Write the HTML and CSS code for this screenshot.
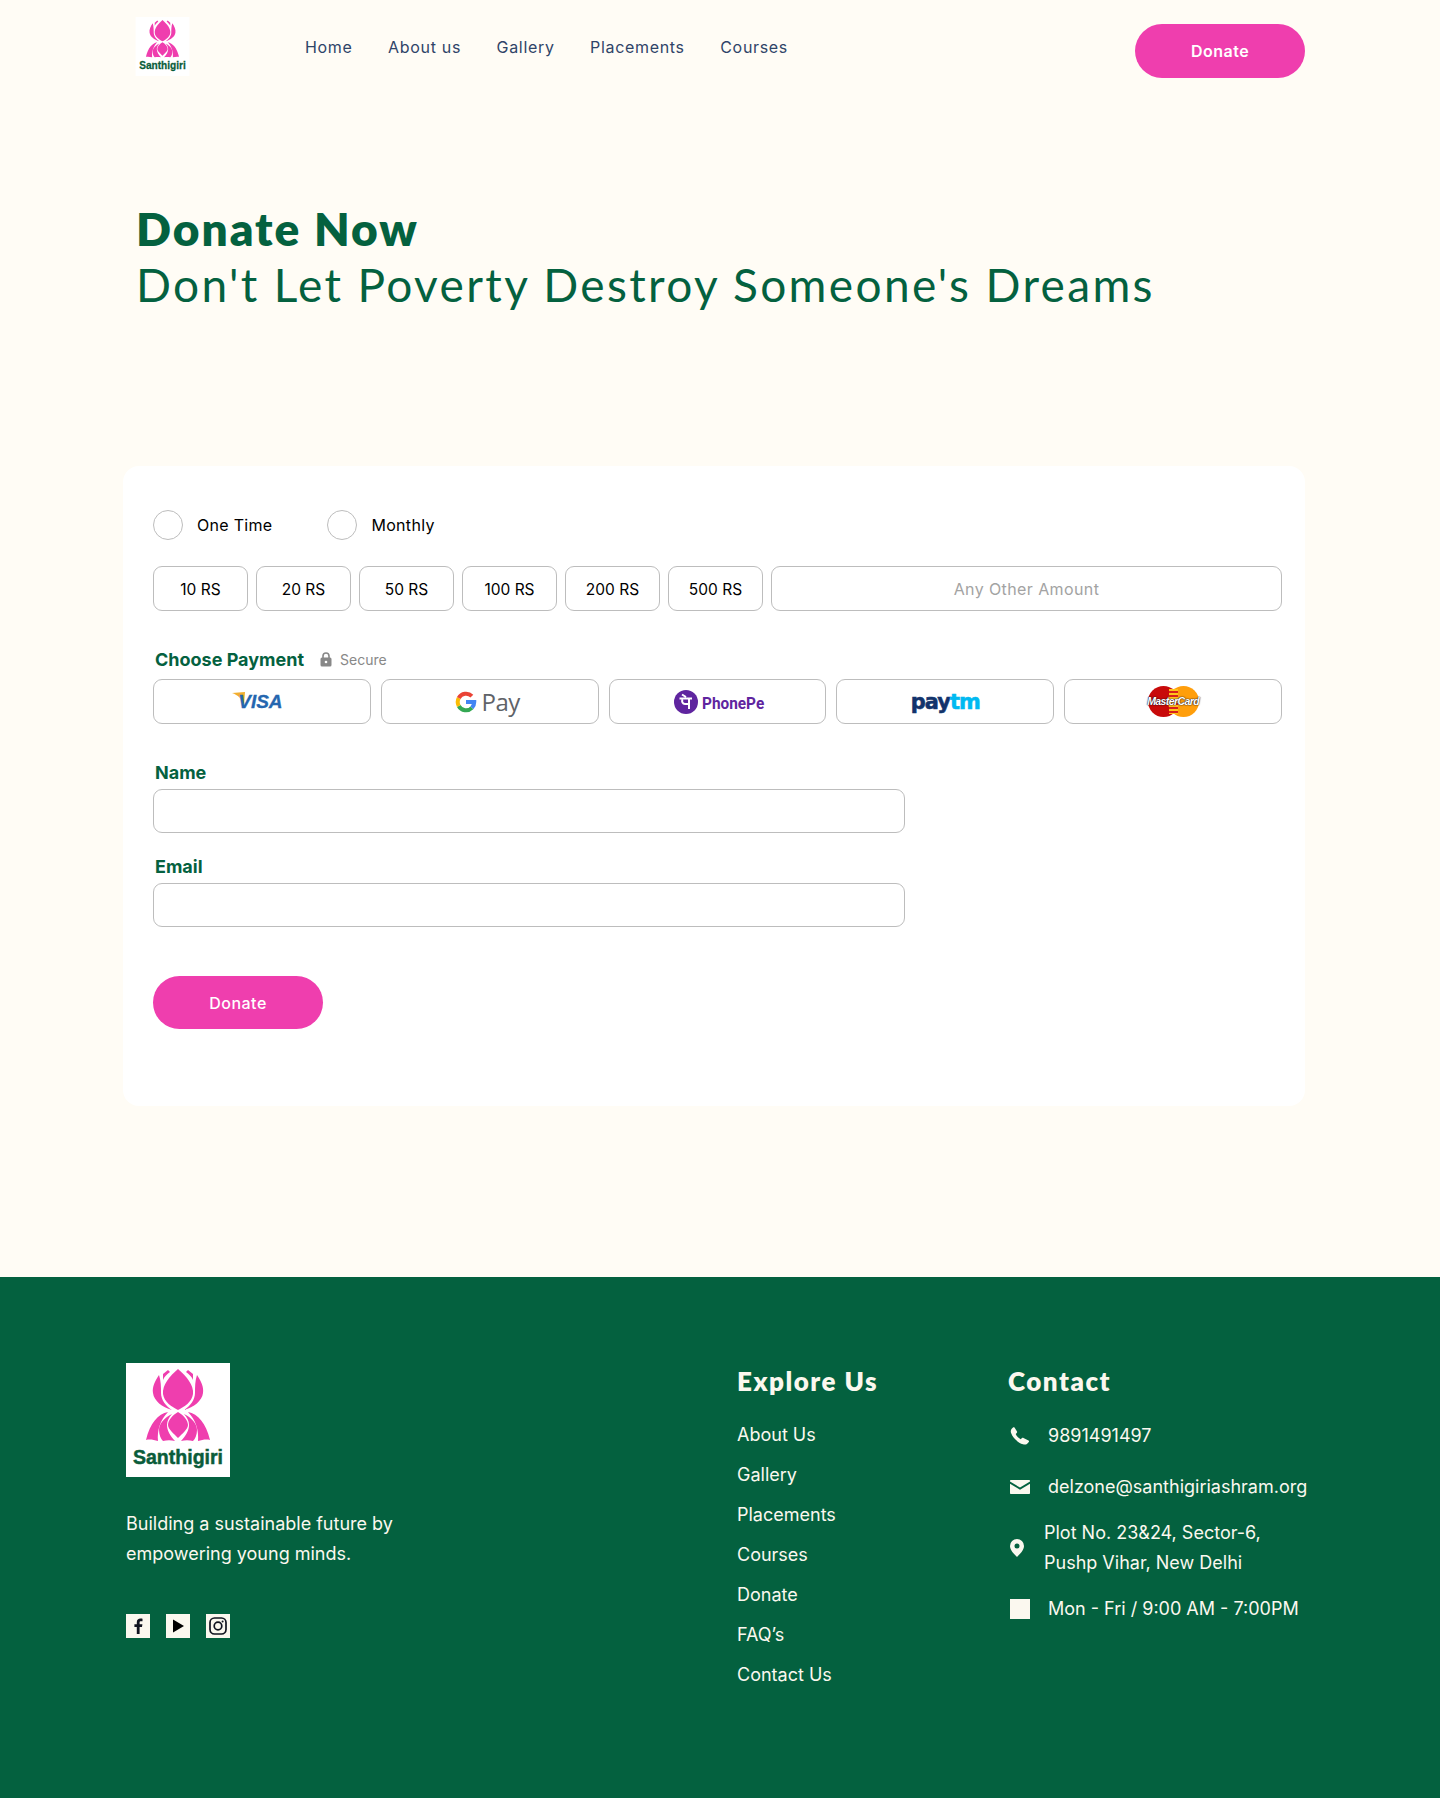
FILE: index.html
```html
<!DOCTYPE html>
<html lang="en">
<head>
<meta charset="utf-8">
<title>Donate Now - Santhigiri</title>
<link rel="stylesheet" href="styles.css">
</head>
<body>
<header class="site-header">
  <svg class="logo logo-small" viewBox="0 0 104 114" aria-label="Santhigiri">
    <rect width="104" height="114" fill="#fff"/>
    <g fill="#ef3eae">
      <path d="M52 6C60 13 68 22 67 31C66 39 58 44 52 47C46 44 38 39 37 31C36 22 44 13 52 6Z"/>
      <path d="M52 49C57 52 62 57 62 62C62 66 56 71 52 75C48 71 42 66 42 62C42 57 47 52 52 49Z"/>
      <g>
        <path d="M33 12C29 18 26 24 27 30C28 38 36 44 46 47C40 43 35 37 35 30C35 24 35 18 33 12Z"/>
        <path d="M42 7L37 11L37 17C38 14 41 11 44 9Z"/>
        <path d="M42 49C32 51 24 60 20 77C24 76 28 77 32 78C31 68 34 57 42 49Z"/>
        <path d="M46 51C38 55 33 61 33 67C33 72 35 76 37 78C41 77 45 77 49 78C44 73 41 67 41 62C41 58 43 54 46 51Z"/>
      </g>
      <g transform="translate(104 0) scale(-1 1)">
        <path d="M33 12C29 18 26 24 27 30C28 38 36 44 46 47C40 43 35 37 35 30C35 24 35 18 33 12Z"/>
        <path d="M42 7L37 11L37 17C38 14 41 11 44 9Z"/>
        <path d="M42 49C32 51 24 60 20 77C24 76 28 77 32 78C31 68 34 57 42 49Z"/>
        <path d="M46 51C38 55 33 61 33 67C33 72 35 76 37 78C41 77 45 77 49 78C44 73 41 67 41 62C41 58 43 54 46 51Z"/>
      </g>
    </g>
    <text class="logo-word" x="7" y="101" textLength="90" lengthAdjust="spacingAndGlyphs">Santhigiri</text>
  </svg>
  <nav class="main-nav">
    <a href="#">Home</a>
    <a href="#">About us</a>
    <a href="#">Gallery</a>
    <a href="#">Placements</a>
    <a href="#">Courses</a>
  </nav>
  <a class="pill-btn header-btn" href="#">Donate</a>
</header>

<section class="hero">
  <h1>Donate Now</h1>
  <p>Don't Let Poverty Destroy Someone's Dreams</p>
</section>

<main class="card">
  <div class="freq-row">
    <label class="freq"><span class="radio"></span>One Time</label>
    <label class="freq"><span class="radio"></span>Monthly</label>
  </div>
  <div class="amounts">
    <div class="amount">10 RS</div>
    <div class="amount">20 RS</div>
    <div class="amount">50 RS</div>
    <div class="amount">100 RS</div>
    <div class="amount">200 RS</div>
    <div class="amount">500 RS</div>
    <input class="amount amount-other" type="text" placeholder="Any Other Amount">
  </div>

  <div class="pay-head">
    <span class="field-label">Choose Payment</span>
    <span class="secure">
      <svg class="lock" viewBox="0 0 12 15"><path d="M3 6V4a3 3 0 0 1 6 0v2" fill="none" stroke="#888" stroke-width="1.6"/><rect x="0.5" y="5.5" width="11" height="9" rx="1.5" fill="#888"/><circle cx="6" cy="10" r="1.3" fill="#fff"/></svg>
      Secure
    </span>
  </div>
  <div class="payments">
    <div class="pay pay-visa">
      <svg class="visa-wedge" viewBox="0 0 14 14"><path d="M0 1L13 0L12 13C10 7 6 3 0 1Z" fill="#f2ae2e"/></svg>
      <span class="visa">VISA</span>
    </div>
    <div class="pay pay-gpay">
      <svg class="g-mark" viewBox="0 0 24 24">
        <path d="M12 12H21A9 9 0 0 1 18.4 18.4" fill="none" stroke="#4285f4" stroke-width="4.4"/>
        <path d="M18.4 18.4A9 9 0 0 1 4.1 16.3" fill="none" stroke="#34a853" stroke-width="4.4"/>
        <path d="M4.1 16.3A9 9 0 0 1 4.1 7.7" fill="none" stroke="#fbbc05" stroke-width="4.4"/>
        <path d="M4.1 7.7A9 9 0 0 1 18.4 5.6" fill="none" stroke="#ea4335" stroke-width="4.4"/>
      </svg>
      <span class="gpay">Pay</span>
    </div>
    <div class="pay pay-phonepe">
      <svg class="pe-mark" viewBox="0 0 24 24">
        <circle cx="12" cy="12" r="12" fill="#5f259f"/>
        <path d="M5.5 8.5H18M15 8.5V19M15 14H11A3 3 0 0 1 8.5 9.5M8 4.5L12 7" fill="none" stroke="#fff" stroke-width="2"/>
      </svg>
      <span class="phonepe">PhonePe</span>
    </div>
    <div class="pay"><span class="paytm"><span class="paytm-pay">pay</span><span class="paytm-tm">tm</span></span></div>
    <div class="pay">
      <span class="mc">
        <span class="mc-red"></span>
        <span class="mc-orange"></span>
        <span class="mc-mid"></span>
        <span class="mc-text">MasterCard</span>
      </span>
    </div>
  </div>

  <div class="field field-first">
    <label class="field-label">Name</label>
    <input class="text-input" type="text">
  </div>
  <div class="field">
    <label class="field-label">Email</label>
    <input class="text-input" type="email">
  </div>
  <a class="pill-btn form-btn" href="#">Donate</a>
</main>

<footer class="site-footer">
  <div class="foot-brand">
    <svg class="logo logo-large" viewBox="0 0 104 114" aria-label="Santhigiri">
      <rect width="104" height="114" fill="#fff"/>
      <g fill="#ef3eae">
        <path d="M52 6C60 13 68 22 67 31C66 39 58 44 52 47C46 44 38 39 37 31C36 22 44 13 52 6Z"/>
        <path d="M52 49C57 52 62 57 62 62C62 66 56 71 52 75C48 71 42 66 42 62C42 57 47 52 52 49Z"/>
        <g>
          <path d="M33 12C29 18 26 24 27 30C28 38 36 44 46 47C40 43 35 37 35 30C35 24 35 18 33 12Z"/>
          <path d="M42 7L37 11L37 17C38 14 41 11 44 9Z"/>
          <path d="M42 49C32 51 24 60 20 77C24 76 28 77 32 78C31 68 34 57 42 49Z"/>
          <path d="M46 51C38 55 33 61 33 67C33 72 35 76 37 78C41 77 45 77 49 78C44 73 41 67 41 62C41 58 43 54 46 51Z"/>
        </g>
        <g transform="translate(104 0) scale(-1 1)">
          <path d="M33 12C29 18 26 24 27 30C28 38 36 44 46 47C40 43 35 37 35 30C35 24 35 18 33 12Z"/>
          <path d="M42 7L37 11L37 17C38 14 41 11 44 9Z"/>
          <path d="M42 49C32 51 24 60 20 77C24 76 28 77 32 78C31 68 34 57 42 49Z"/>
          <path d="M46 51C38 55 33 61 33 67C33 72 35 76 37 78C41 77 45 77 49 78C44 73 41 67 41 62C41 58 43 54 46 51Z"/>
        </g>
      </g>
      <text class="logo-word" x="7" y="101" textLength="90" lengthAdjust="spacingAndGlyphs">Santhigiri</text>
    </svg>
    <p class="tagline">Building a sustainable future by<br>empowering young minds.</p>
    <div class="socials">
      <a class="social" href="#"><svg viewBox="0 0 24 24"><path d="M13.600 20V13H16L16.400 10.200H13.600V8.500C13.600 7.700 13.900 7.200 15 7.200H16.500V4.700C16.200 4.700 15.400 4.600 14.500 4.600C12.300 4.600 10.800 5.900 10.800 8.300V10.200H8.400V13H10.800V20Z" fill="#10131f"/></svg></a>
      <a class="social" href="#"><svg viewBox="0 0 24 24"><path d="M7 5.500L18 12L7 18.500Z" fill="#000"/></svg></a>
      <a class="social" href="#"><svg viewBox="0 0 24 24"><rect x="4" y="4" width="16" height="16" rx="4.500" fill="none" stroke="#10131f" stroke-width="1.700"/><circle cx="12" cy="12" r="3.800" fill="none" stroke="#10131f" stroke-width="1.700"/><circle cx="16.600" cy="7.400" r="1" fill="#10131f"/></svg></a>
    </div>
  </div>
  <div class="foot-links">
    <h2>Explore Us</h2>
    <a href="#">About Us</a>
    <a href="#">Gallery</a>
    <a href="#">Placements</a>
    <a href="#">Courses</a>
    <a href="#">Donate</a>
    <a href="#">FAQ’s</a>
    <a href="#">Contact Us</a>
  </div>
  <div class="foot-contact">
    <h2>Contact</h2>
    <div class="contact-row contact-phone">
      <svg class="c-icon" viewBox="0 0 20 18"><path d="M4.500 0.500L7 4.500C7.300 5 7.100 5.500 6.700 5.900L5.700 6.900C6.500 9 8.500 11.200 10.700 12.300L12 11.100C12.400 10.700 13 10.600 13.500 10.900L18.500 13.600C19 13.900 19.200 14.500 18.800 15L17.200 16.700C16.200 17.600 14.500 17.800 13 17.300C7.500 15.500 2.800 10.800 1.100 6C0.500 4.300 0.700 2.800 1.700 1.700L3 0.500C3.400 0.100 4.100 0.100 4.500 0.500Z" fill="#fbf8ef"/></svg>
      <span>9891491497</span>
    </div>
    <div class="contact-row">
      <svg class="c-icon" viewBox="0 0 20 14"><path d="M1 0H19C19.600 0 20 0.400 20 1V1.600L10 7.500L0 1.600V1C0 0.400 0.400 0 1 0ZM0 3.800V13C0 13.600 0.400 14 1 14H19C19.600 14 20 13.600 20 13V3.800L10 9.700Z" fill="#fbf8ef"/></svg>
      <span>delzone@santhigiriashram.org</span>
    </div>
    <div class="contact-row contact-address">
      <svg class="c-pin" viewBox="0 0 14 18"><path fill-rule="evenodd" d="M7 0A7 7 0 0 1 14 7C14 11 10 15 7 18C4 15 0 11 0 7A7 7 0 0 1 7 0ZM7 4.500A2.500 2.500 0 1 0 7 9.500A2.500 2.500 0 1 0 7 4.500Z" fill="#fbf8ef"/></svg>
      <span>Plot No. 23&amp;24, Sector-6,<br>Pushp Vihar, New Delhi</span>
    </div>
    <div class="contact-row">
      <span class="c-square"></span>
      <span>Mon - Fri / 9:00 AM - 7:00PM</span>
    </div>
  </div>
</footer>
</body>
</html>
```

FILE: styles.css
```css
* { box-sizing: border-box; }
html, body { margin: 0; padding: 0; }
body {
  background: #fffcf5;
  color: #000;
  font-family: "Inter", "Liberation Sans", sans-serif;
  width: 1440px;
  min-height: 1798px;
}
a { text-decoration: none; color: inherit; }

.logo { display: block; flex: none; }
.logo-word {
  font-family: "Liberation Sans", sans-serif;
  font-weight: 700;
  font-size: 21px;
  fill: #0a5c3a;
  stroke: #0a5c3a;
  stroke-width: 0.5px;
}
.logo-small { width: 55px; height: 59px; }
.logo-large { width: 104px; height: 114px; }

.site-header {
  display: flex;
  align-items: flex-start;
  padding: 17px 135px 0 135px;
  height: 78px;
}
.main-nav {
  display: flex;
  gap: 35.5px;
  margin-left: 115px;
  padding-top: 19px;
  font-family: "Inter", sans-serif;
  font-size: 16px;
  line-height: 22px;
  letter-spacing: 0.68px;
  color: #2f4468;
}
.pill-btn {
  display: flex;
  align-items: center;
  justify-content: center;
  width: 170px;
  height: 54px;
  border-radius: 27px;
  background: #ef3eae;
  color: #fff;
  font-size: 16px;
  font-weight: 500;
  letter-spacing: 0.5px;
}
.header-btn { margin-left: auto; margin-top: 7px; font-weight: 600; }

.hero {
  margin-top: 123px;
  padding-left: 136px;
  color: #04613f;
  font-family: "Lato", sans-serif;
  font-size: 46px;
  line-height: 56px;
  letter-spacing: 2.36px;
}
.hero h1 { margin: 0; font: inherit; font-weight: 800; letter-spacing: 2px; }
.hero p { margin: 0; }

.card {
  margin: 153px 135px 0 123px;
  width: 1182px;
  height: 640px;
  padding: 44px 23px 0 30px;
  background: #fff;
  border-radius: 16px;
}
.freq-row { display: flex; gap: 55px; height: 30px; }
.freq { display: flex; align-items: center; gap: 14px; font-size: 16px; letter-spacing: 0.3px; }
.radio { width: 30px; height: 30px; border: 1px solid #bdbdbd; border-radius: 50%; }

.amounts { display: flex; gap: 8px; margin-top: 26px; }
.amount {
  display: flex;
  align-items: center;
  justify-content: center;
  width: 95px;
  height: 45px;
  padding-top: 1px;
  border: 1px solid #bdbdbd;
  border-radius: 9px;
  background: #fff;
  font-family: inherit;
  font-size: 15.5px;
}
.amount-other {
  flex: 1;
  width: auto;
  padding-top: 2px;
  text-align: center;
  color: #a3a3a3;
  font-size: 16px;
  letter-spacing: 0.4px;
  outline: none;
}
.amount-other::placeholder { color: #a3a3a3; opacity: 1; }

.pay-head { display: flex; align-items: center; gap: 16px; height: 24px; margin-top: 36px; padding-left: 2px; }
.field-label { display: block; color: #04613f; font-size: 18px; line-height: 22px; font-weight: 700; padding-left: 2px; }
.pay-head .field-label { padding-left: 0; margin-top: 1px; }
.secure { display: flex; align-items: center; gap: 8px; color: #888; font-size: 14px; }
.lock { width: 12px; height: 15px; }

.payments { display: grid; grid-template-columns: repeat(5, 1fr); gap: 10px; margin-top: 8px; }
.pay {
  position: relative;
  display: flex;
  align-items: center;
  justify-content: center;
  height: 45px;
  border: 1px solid #bdbdbd;
  border-radius: 9px;
}
.pay-visa { padding-right: 9px; }
.visa-wedge { width: 14px; height: 14px; margin-right: -14px; margin-top: -6px; }
.visa { font-family: "Liberation Sans", sans-serif; font-weight: 700; font-style: italic; font-size: 19px; color: #2566af; margin-left: 6px; -webkit-text-stroke: 0.3px #2566af; }
.pay-gpay { gap: 5px; padding-right: 5px; }
.g-mark { width: 22px; height: 22px; }
.gpay { font-family: "Open Sans", sans-serif; font-size: 24px; color: #5f6368; letter-spacing: -0.5px; }
.pay-phonepe { gap: 4px; padding-left: 4px; }
.pe-mark { width: 24px; height: 24px; }
.phonepe { font-family: "Roboto", sans-serif; font-weight: 700; font-size: 16px; color: #5f259f; transform: scaleX(0.96); transform-origin: left; margin-right: -2px; margin-top: 4px; }
.paytm { display: block; font-family: "DejaVu Sans", sans-serif; font-weight: 700; font-size: 22px; line-height: 26px; letter-spacing: -1px; transform: scaleX(0.95); -webkit-text-stroke: 0.6px; }
.paytm-pay { color: #12336b; }
.paytm-tm { color: #00b9f1; }
.mc { position: relative; display: block; width: 51px; height: 31px; }
.mc-red, .mc-orange { position: absolute; top: 0; width: 31px; height: 31px; border-radius: 50%; }
.mc-red { left: 0; background: #c80a0a; }
.mc-orange { right: 0; background: #ff9e0b; }
.mc-mid {
  position: absolute;
  left: 21px;
  top: 3px;
  width: 9px;
  height: 25px;
  background: repeating-linear-gradient(180deg, #ffc21a 0 2px, #d8201a 2px 4px);
}
.mc-text {
  position: absolute;
  left: -1px;
  right: -1px;
  top: 8px;
  text-align: center;
  font-family: "Liberation Sans", sans-serif;
  font-weight: 700;
  font-style: italic;
  font-size: 10.5px;
  line-height: 14px;
  letter-spacing: -0.6px;
  color: #fff;
  text-shadow: 0 0 1.5px #112, 0 0 1px #112;
}

.field { margin-top: 22px; }
.field-first { margin-top: 37px; }
.field .field-label { position: relative; top: 1px; }
.text-input {
  display: block;
  width: 752px;
  height: 44px;
  margin-top: 6px;
  border: 1px solid #bdbdbd;
  border-radius: 9px;
  background: #fff;
  outline: none;
}
.form-btn { margin-top: 49px; height: 53px; }

.site-footer {
  display: flex;
  margin-top: 171px;
  height: 521px;
  padding: 86px 0 0 126px;
  background: #04613f;
  color: #fbf8ef;
  font-size: 18px;
}
.foot-brand { width: 611px; }
.tagline { margin: 32px 0 0; line-height: 30px; }
.socials { display: flex; gap: 16px; margin-top: 45px; }
.social { display: block; width: 24px; height: 24px; background: #fbf8ef; }
.social svg { display: block; width: 24px; height: 24px; }
.site-footer h2 {
  margin: 2px 0 0;
  font-family: "Lato", sans-serif;
  font-size: 26px;
  line-height: 32px;
  font-weight: 800;
  letter-spacing: 1.5px;
  color: #fbf8ef;
}
.foot-links { display: flex; flex-direction: column; width: 271px; gap: 16px; line-height: 24px; }
.foot-links h2 { margin-bottom: 10px; }
.foot-contact { display: flex; flex-direction: column; gap: 19px; }
.foot-contact h2 { margin-bottom: 8px; }
.contact-row { display: flex; align-items: center; gap: 18px; padding-left: 2px; line-height: 24px; }
.contact-phone { margin-bottom: 8px; }
.contact-address { line-height: 30px; gap: 20px; }
.c-icon { width: 20px; height: 18px; flex: none; }
.c-pin { width: 14px; height: 18px; flex: none; }
.c-square { width: 20px; height: 20px; background: #fbf8ef; flex: none; }
```
